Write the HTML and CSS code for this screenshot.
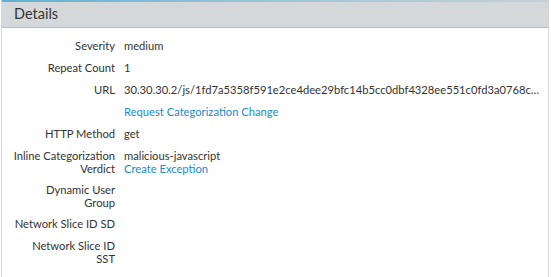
FILE: index.html
```html
<!DOCTYPE html>
<html>
<head>
<meta charset="utf-8">
<link rel="stylesheet" href="styles.css">
</head>
<body>
<div class="panel">
  <div class="panel-header">Details</div>
  <div class="panel-body">
    <div class="row"><div class="label">Severity</div><div class="value">medium</div></div>
    <div class="row"><div class="label">Repeat Count</div><div class="value">1</div></div>
    <div class="row"><div class="label">URL</div><div class="value ellipsis">30.30.30.2/js/1fd7a5358f591e2ce4dee29bfc14b5cc0dbf4328ee551c0fd3a0768cc4b2e91f0a.js</div></div>
    <div class="row"><div class="label"></div><div class="value"><a class="link">Request Categorization Change</a></div></div>
    <div class="row"><div class="label">HTTP Method</div><div class="value">get</div></div>
    <div class="row"><div class="label"><span class="nowrap">Inline Categorization</span> Verdict</div><div class="value">malicious-javascript<br><a class="link">Create Exception</a></div></div>
    <div class="row"><div class="label">Dynamic User Group</div><div class="value"></div></div>
    <div class="row"><div class="label">Network Slice ID SD</div><div class="value"></div></div>
    <div class="row"><div class="label">Network Slice ID SST</div><div class="value"></div></div>
  </div>
</div>
</body>
</html>
```
FILE: styles.css
```css
html, body {
  margin: 0;
  padding: 0;
  background: #ffffff;
}
body {
  font-family: Lato, "Open Sans", sans-serif;
  color: #333333;
}
.panel {
  width: 548px;
  border-left: 1px solid #d6d6d6;
  border-right: 1px solid #d6d6d6;
  margin-left: 1px;
  height: 277px;
  box-sizing: border-box;
  overflow: hidden;
}
.panel-header {
  border-image: linear-gradient(to right, #5eb1d1, #9cc6d6 50%, #c4d0d6) 1;
  border-width: 2px 0 0 0;
  border-style: solid;
  background: #d5d8da;
  box-shadow: inset 0 -1px 0 #babdbf;
  box-sizing: border-box;
  height: 28px;
  padding-left: 12px;
  font-size: 14.5px;
  line-height: 24px;
  color: #333;
}
.panel-body {
  padding-top: 7px;
}
.row {
  display: grid;
  grid-template-columns: 113px 1fr;
  column-gap: 9px;
  padding: 4px 0;
  min-height: 14px;
  font-size: 11.2px;
  line-height: 13px;
  align-items: start;
}
.label {
  text-align: right;
  padding-left: 11.7px;
}
.nowrap {
  white-space: nowrap;
}
.value {
  min-width: 0;
  padding-right: 7px;
}
.ellipsis {
  white-space: nowrap;
  overflow: hidden;
  text-overflow: ellipsis;
}
.link {
  color: #1a8bcb;
  cursor: pointer;
}
```
